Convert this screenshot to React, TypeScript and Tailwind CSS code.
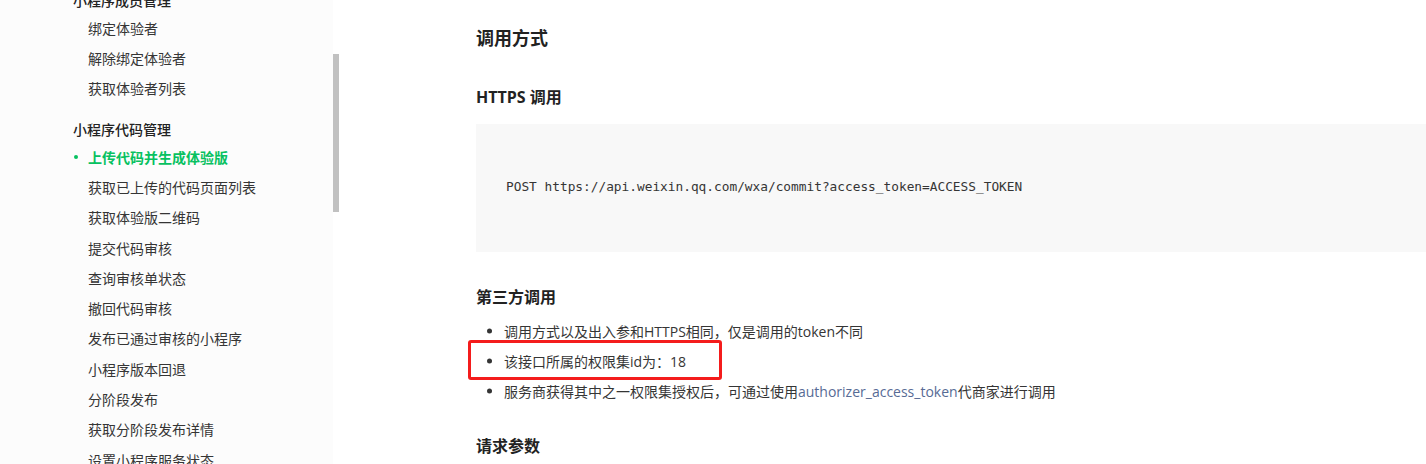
import React from "react";

const font = { fontFamily: '"Open Sans", "Noto Sans CJK SC", sans-serif' };

const groups: { title: string; items: string[]; active?: string }[] = [
  { title: "小程序成员管理", items: ["绑定体验者", "解除绑定体验者", "获取体验者列表"] },
  {
    title: "小程序代码管理",
    active: "上传代码并生成体验版",
    items: [
      "上传代码并生成体验版",
      "获取已上传的代码页面列表",
      "获取体验版二维码",
      "提交代码审核",
      "查询审核单状态",
      "撤回代码审核",
      "发布已通过审核的小程序",
      "小程序版本回退",
      "分阶段发布",
      "获取分阶段发布详情",
      "设置小程序服务状态",
    ],
  },
];

function Sidebar() {
  return (
    <div className="w-[333px] h-[464px] bg-[#fcfcfc] overflow-hidden shrink-0">
      <div className="-mt-[13px]">
        {groups.map((g, gi) => (
          <div key={gi} className={gi > 0 ? "mt-[13px]" : ""}>
            <div className="h-[26px] flex items-center pl-[73px] text-[14px] font-medium text-[#222]">
              {g.title}
            </div>
            {g.items.map((it, i) => {
              const active = it === g.active;
              return (
                <div
                  key={i}
                  className={
                    "relative flex items-center pl-[88px] text-[14px] " +
                    (gi === 0 ? "h-[30px] " : "h-[30.3px] ") +
                    (active ? "text-[#07c160] font-bold" : "text-[#353535]")
                  }
                >
                  {active && (
                    <span className="absolute left-[74px] top-1/2 -translate-y-1/2 w-[4px] h-[4px] rounded-full bg-[#07c160]" />
                  )}
                  {it}
                </div>
              );
            })}
          </div>
        ))}
      </div>
    </div>
  );
}

function Bullet({ children, boxed }: { children: React.ReactNode; boxed?: boolean }) {
  return (
    <li className="relative h-[30px] flex items-center pl-[28px] text-[14px] text-[#353535]">
      <span className="absolute left-[11px] top-1/2 -translate-y-1/2 w-[5px] h-[5px] rounded-full bg-[#353535]" />
      {children}
      {boxed && (
        <span className="absolute left-[-8px] top-[-6px] w-[254px] h-[40px] border-[3px] border-[#f41c1c] rounded-[3px]" />
      )}
    </li>
  );
}

export default function App() {
  return (
    <div className="flex w-[1426px] h-[464px] bg-white overflow-hidden" style={font}>
      <Sidebar />
      <div className="w-[6px] shrink-0">
        <div className="mt-[54px] h-[158px] w-[6px] bg-[#c1c1c1]" />
      </div>
      <div className="flex-1 pl-[137px] pt-[26px] min-w-0">
        <h1 className="text-[18px] leading-[24px] font-bold text-[#222]">调用方式</h1>
        <h2 className="mt-[36px] text-[16px] leading-[22px] font-bold text-[#222]">HTTPS 调用</h2>
        <div className="mt-[16px] h-[128px] bg-[#f8f8f8] pl-[30px] pt-[53px]">
          <pre
            className="text-[12.8px] leading-[20px] text-[#353535]"
            style={{ fontFamily: '"DejaVu Sans Mono", "Liberation Mono", monospace' }}
          >
            POST https://api.weixin.qq.com/wxa/commit?access_token=ACCESS_TOKEN
          </pre>
        </div>
        <h2 className="mt-[34px] text-[16px] leading-[22px] font-bold text-[#222]">第三方调用</h2>
        <ul className="mt-[8px]">
          <Bullet>调用方式以及出入参和HTTPS相同，仅是调用的token不同</Bullet>
          <Bullet boxed>该接口所属的权限集id为：18</Bullet>
          <Bullet>
            服务商获得其中之一权限集授权后，可通过使用
            <span className="text-[#576b95]">authorizer_access_token</span>
            代商家进行调用
          </Bullet>
        </ul>
        <h2 className="mt-[29px] text-[16px] leading-[22px] font-bold text-[#222]">请求参数</h2>
      </div>
    </div>
  );
}
